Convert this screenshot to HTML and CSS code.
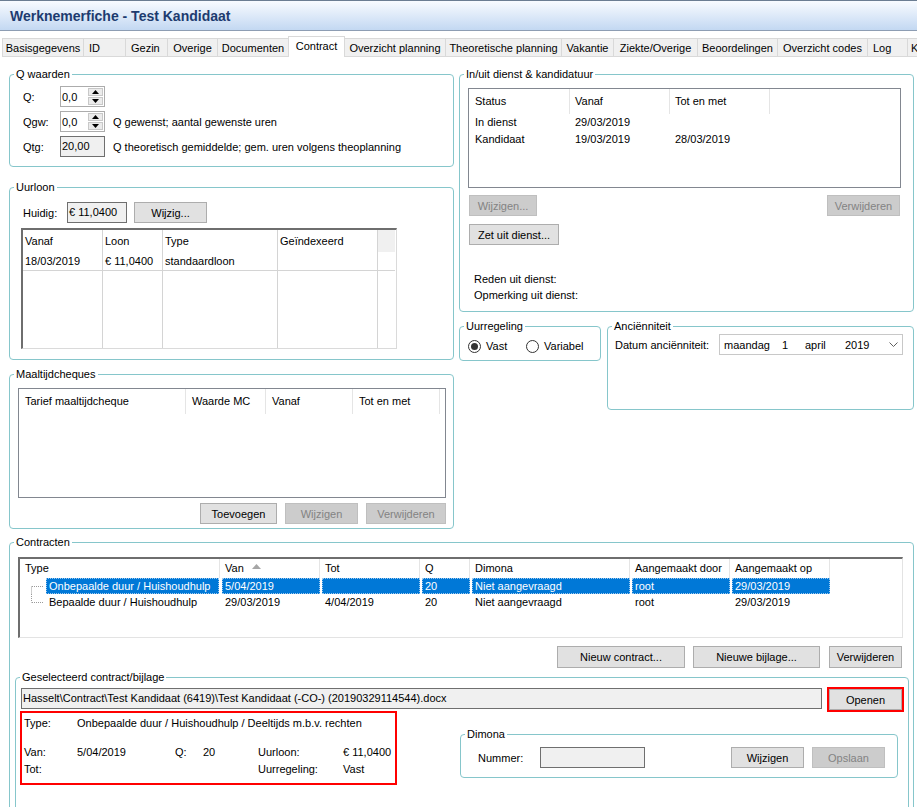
FILE: index.html
```html
<!DOCTYPE html>
<html lang="nl">
<head>
<meta charset="utf-8">
<title>Werknemerfiche - Test Kandidaat</title>
<link rel="stylesheet" href="styles.css">
</head>
<body>
<div class="window">
  <header class="titlebar"><h1 class="title">Werknemerfiche - Test Kandidaat</h1></header>
  <nav class="tabs">
    <div class="tab t-basis">Basisgegevens</div>
    <div class="tab t-id">ID</div>
    <div class="tab t-gezin">Gezin</div>
    <div class="tab t-overige">Overige</div>
    <div class="tab t-doc">Documenten</div>
    <div class="tab t-contract active">Contract</div>
    <div class="tab t-ovp">Overzicht planning</div>
    <div class="tab t-theo">Theoretische planning</div>
    <div class="tab t-vak">Vakantie</div>
    <div class="tab t-ziekte">Ziekte/Overige</div>
    <div class="tab t-beo">Beoordelingen</div>
    <div class="tab t-codes">Overzicht codes</div>
    <div class="tab t-log">Log</div>
    <div class="tab t-k">K</div>
  </nav>

  <main class="page">
    <div class="top">
      <div class="col">
        <fieldset class="group g-q">
          <legend>Q waarden</legend>
          <div class="q-body">
            <div class="q-row">
              <span class="q-label">Q:</span>
              <div class="numbox"><span class="val">0,0</span>
                <span class="spin"><span class="sb"><svg width="7" height="4" viewBox="0 0 7 4"><path d="M0 4 L3.5 0 L7 4Z"/></svg></span><span class="sb"><svg width="7" height="4" viewBox="0 0 7 4"><path d="M0 0 L3.5 4 L7 0Z"/></svg></span></span>
              </div>
            </div>
            <div class="q-row">
              <span class="q-label">Qgw:</span>
              <div class="numbox"><span class="val">0,0</span>
                <span class="spin"><span class="sb"><svg width="7" height="4" viewBox="0 0 7 4"><path d="M0 4 L3.5 0 L7 4Z"/></svg></span><span class="sb"><svg width="7" height="4" viewBox="0 0 7 4"><path d="M0 0 L3.5 4 L7 0Z"/></svg></span></span>
              </div>
              <span class="q-desc">Q gewenst; aantal gewenste uren</span>
            </div>
            <div class="q-row">
              <span class="q-label">Qtg:</span>
              <div class="readbox q-read">20,00</div>
              <span class="q-desc">Q theoretisch gemiddelde; gem. uren volgens theoplanning</span>
            </div>
          </div>
        </fieldset>

        <fieldset class="group g-uurloon">
          <legend>Uurloon</legend>
          <div class="ul-body">
            <div class="ul-row">
              <span class="ul-label">Huidig:</span>
              <div class="readbox money">€ 11,0400</div>
              <div class="btn b-wijzig">Wijzig...</div>
            </div>
            <div class="dgrid">
              <div class="dh">Vanaf</div><div class="dh">Loon</div><div class="dh">Type</div><div class="dh">Geïndexeerd</div><div class="dh filler"></div>
              <div class="dr">18/03/2019</div><div class="dr">€ 11,0400</div><div class="dr">standaardloon</div><div class="dr"></div><div class="dr last"></div>
              <div class="de"></div><div class="de"></div><div class="de"></div><div class="de"></div><div class="de last"></div>
            </div>
          </div>
        </fieldset>

        <fieldset class="group g-mc">
          <legend>Maaltijdcheques</legend>
          <div class="mc-body">
            <div class="list mc-list">
              <div class="lhead">
                <div class="lh w167">Tarief maaltijdcheque</div>
                <div class="lh w80">Waarde MC</div>
                <div class="lh w87">Vanaf</div>
                <div class="lh w87">Tot en met</div>
              </div>
            </div>
            <div class="btn-row mc-btns">
              <div class="btn w77">Toevoegen</div>
              <div class="btn disabled w73">Wijzigen</div>
              <div class="btn disabled w80b">Verwijderen</div>
            </div>
          </div>
        </fieldset>
      </div>

      <div class="col">
        <fieldset class="group g-inuit">
          <legend>In/uit dienst &amp; kandidatuur</legend>
          <div class="iu-body">
            <div class="list iu-list">
              <div class="lhead">
                <div class="lh w101">Status</div>
                <div class="lh w100">Vanaf</div>
                <div class="lh w100">Tot en met</div>
              </div>
              <div class="lrow"><div class="lc w101">In dienst</div><div class="lc w100">29/03/2019</div><div class="lc w100"></div></div>
              <div class="lrow"><div class="lc w101">Kandidaat</div><div class="lc w100">19/03/2019</div><div class="lc w100">28/03/2019</div></div>
            </div>
            <div class="iu-btns">
              <div class="btn disabled w68">Wijzigen...</div>
              <div class="btn disabled w73">Verwijderen</div>
            </div>
            <div class="btn w90 b-zet">Zet uit dienst...</div>
            <div class="iu-info">
              <div>Reden uit dienst:</div>
              <div>Opmerking uit dienst:</div>
            </div>
          </div>
        </fieldset>

        <div class="right-row">
          <fieldset class="group g-uurreg">
            <legend>Uurregeling</legend>
            <div class="ur-body">
              <div class="radio r-vast"><span class="rc on"></span><span>Vast</span></div>
              <div class="radio"><span class="rc"></span><span>Variabel</span></div>
            </div>
          </fieldset>
          <fieldset class="group g-anc">
            <legend>Anciënniteit</legend>
            <div class="anc-body">
              <span class="anc-label">Datum anciënniteit:</span>
              <div class="datebox">
                <span class="d-day">maandag</span><span class="d-num">1</span><span class="d-mon">april</span><span class="d-year">2019</span>
                <svg class="chev" width="9" height="5" viewBox="0 0 9 5"><path d="M0.5 0.5 L4.5 4.5 L8.5 0.5" fill="none" stroke="#606060" stroke-width="1"/></svg>
              </div>
            </div>
          </fieldset>
        </div>
      </div>
    </div>

    <fieldset class="group g-contr">
      <legend>Contracten</legend>
      <div class="ct-body">
        <div class="ct-list">
          <div class="lhead ct-head">
            <div class="lh c200">Type</div>
            <div class="lh c100 sorted">Van <svg class="sort" width="9" height="5" viewBox="0 0 9 5"><path d="M0 5 L4.5 0 L9 5Z" fill="#a6a6a6"/></svg></div>
            <div class="lh c100">Tot</div>
            <div class="lh c50">Q</div>
            <div class="lh c160">Dimona</div>
            <div class="lh c100">Aangemaakt door</div>
            <div class="lh c100">Aangemaakt op</div>
          </div>
          <div class="crow sel">
            <div class="cc c200 ctype"><svg class="tree" width="14" height="16" viewBox="0 0 14 16"><path d="M0.5 8.5 V16 M1 8.5 H13" stroke="#9a9a9a" stroke-dasharray="1 1" fill="none"/></svg><span class="hl">Onbepaalde duur / Huishoudhulp</span></div>
            <div class="cc c100"><span class="hl">5/04/2019</span></div>
            <div class="cc c100"><span class="hl"></span></div>
            <div class="cc c50"><span class="hl">20</span></div>
            <div class="cc c160"><span class="hl">Niet aangevraagd</span></div>
            <div class="cc c100"><span class="hl">root</span></div>
            <div class="cc c100"><span class="hl">29/03/2019</span></div>
          </div>
          <div class="crow">
            <div class="cc c200 ctype"><svg class="tree" width="14" height="16" viewBox="0 0 14 16"><path d="M0.5 0 V8.5 M1 8.5 H13" stroke="#9a9a9a" stroke-dasharray="1 1" fill="none"/></svg><span class="hl">Bepaalde duur / Huishoudhulp</span></div>
            <div class="cc c100"><span class="hl">29/03/2019</span></div>
            <div class="cc c100"><span class="hl">4/04/2019</span></div>
            <div class="cc c50"><span class="hl">20</span></div>
            <div class="cc c160"><span class="hl">Niet aangevraagd</span></div>
            <div class="cc c100"><span class="hl">root</span></div>
            <div class="cc c100"><span class="hl">29/03/2019</span></div>
          </div>
        </div>
        <div class="ct-btns">
          <div class="btn b-nc">Nieuw contract...</div>
          <div class="btn b-nb">Nieuwe bijlage...</div>
          <div class="btn b-vw">Verwijderen</div>
        </div>

        <fieldset class="group g-sel">
          <legend>Geselecteerd contract/bijlage</legend>
          <div class="sel-body">
            <div class="path-row">
              <div class="readbox path">Hasselt\Contract\Test Kandidaat (6419)\Test Kandidaat (-CO-) (20190329114544).docx</div>
              <div class="open-wrap"><div class="btn b-open">Openen</div></div>
            </div>
            <div class="sel-detail">
              <div class="redbox">
                <div class="dt-row">
                  <span class="dt-l">Type:</span><span>Onbepaalde duur / Huishoudhulp / Deeltijds m.b.v. rechten</span>
                </div>
                <div class="dt-row r2">
                  <span class="dt-l">Van:</span><span class="dt-v">5/04/2019</span><span class="dt-q">Q:</span><span class="dt-qv">20</span><span class="dt-ul">Uurloon:</span><span>€ 11,0400</span>
                </div>
                <div class="dt-row r3">
                  <span class="dt-l">Tot:</span><span class="dt-v"></span><span class="dt-q"></span><span class="dt-qv"></span><span class="dt-ul">Uurregeling:</span><span>Vast</span>
                </div>
              </div>
              <fieldset class="group g-dimona">
                <legend>Dimona</legend>
                <div class="dm-body">
                  <span class="dm-label">Nummer:</span>
                  <div class="readbox dm-input"></div>
                  <div class="dm-btns">
                    <div class="btn w73">Wijzigen</div>
                    <div class="btn disabled w73">Opslaan</div>
                  </div>
                </div>
              </fieldset>
            </div>
          </div>
        </fieldset>
      </div>
    </fieldset>
  </main>
</div>
</body>
</html>
```

FILE: styles.css
```css
* { box-sizing: border-box; }
html, body { margin: 0; padding: 0; }
body {
  width: 917px;
  height: 807px;
  overflow: hidden;
  background: #ffffff;
  font-family: "Liberation Sans", Arial, sans-serif;
  font-size: 11px;
  color: #000000;
}
.window { width: 917px; height: 807px; overflow: hidden; }

/* title bar */
.titlebar {
  height: 31px;
  border-top: 1px solid #6b7d92;
  border-bottom: 1px solid #8d9db3;
  background: linear-gradient(#f8fbff, #c3d8f2);
  display: flex;
  align-items: center;
  padding-left: 10px;
}
.title {
  margin: 0;
  font-size: 14px;
  line-height: 16px;
  font-weight: bold;
  color: #1d3b6f;
}

/* tabs */
.tabs {
  display: flex;
  margin-top: 5px;
  height: 21px;
  padding-left: 2px;
  white-space: nowrap;
  overflow: hidden;
}
.tab {
  flex: none;
  height: 19px;
  margin-top: 2px;
  background: #f0f0f0;
  border: 1px solid #d9d9d9;
  border-right: none;
  line-height: 18px;
  text-align: center;
}
.tab.active {
  height: 21px;
  margin-top: 0;
  background: #ffffff;
  border-right: 1px solid #d9d9d9;
  border-bottom: none;
  line-height: 18px;
}
.tab.active + .tab { border-left: none; }
.t-basis { width: 81px; }
.t-id { width: 42px; text-align: left; padding-left: 5px; }
.t-gezin { width: 42px; text-align: left; padding-left: 5px; }
.t-overige { width: 50px; }
.t-doc { width: 71px; }
.t-contract { width: 57px; }
.t-ovp { width: 100px; }
.t-theo { width: 116px; }
.t-vak { width: 52px; }
.t-ziekte { width: 84px; }
.t-beo { width: 80px; }
.t-codes { width: 90px; }
.t-log { width: 40px; text-align: left; padding-left: 5px; }
.t-k { width: 30px; text-align: left; padding-left: 3px; }

/* page */
.page { padding: 11px 0 0 9px; }
.top {
  display: grid;
  grid-template-columns: 445px 455px;
  column-gap: 5px;
  align-items: start;
}
.col { display: flex; flex-direction: column; }

.group {
  margin: 0;
  padding: 0;
  border: 1px solid #86c6cb;
  border-radius: 4px;
  min-width: 0;
}
.group > legend {
  margin-left: 4px;
  padding: 0 2px;
  line-height: 13px;
  font-size: 11px;
}

/* generic controls */
.btn {
  flex: none;
  height: 21px;
  border: 1px solid #adadad;
  background: #e1e1e1;
  display: flex;
  align-items: center;
  justify-content: center;
  white-space: nowrap;
}
.btn.disabled {
  background: #cccccc;
  border-color: #bfbfbf;
  color: #838383;
}
.readbox {
  height: 21px;
  border: 1px solid #6f6f6f;
  background: #f0f0f0;
  padding-left: 1px;
  line-height: 19px;
  white-space: nowrap;
  overflow: hidden;
}
.w68 { width: 68px; }
.w73 { width: 73px; }
.w77 { width: 77px; }
.w80b { width: 80px; }
.w90 { width: 90px; }

/* Q waarden */
.g-q { height: 99px; }
.q-body {
  padding: 5px 0 0 13px;
  display: flex;
  flex-direction: column;
  gap: 4px;
}
.q-row { display: flex; align-items: center; height: 21px; }
.q-label { width: 37px; }
.numbox {
  width: 45px;
  height: 21px;
  border: 1px solid #acacac;
  background: #ffffff;
  display: flex;
  align-items: center;
  padding-left: 1px;
}
.numbox .val { flex: 1; }
.spin {
  width: 15px;
  height: 17px;
  margin-right: 1px;
  display: flex;
  flex-direction: column;
  gap: 1px;
}
.sb {
  flex: 1;
  background: #ebebeb;
  border: 1px solid #c8c8c8;
  display: flex;
  align-items: center;
  justify-content: center;
}
.sb svg { display: block; fill: #000000; }
.q-read { width: 45px; }
.q-desc { margin-left: 8px; white-space: nowrap; }

/* Uurloon */
.g-uurloon { height: 179px; margin-top: 14px; }
.ul-body { padding: 8px 0 0 11px; }
.ul-row { display: flex; align-items: center; height: 21px; padding-left: 2px; }
.ul-label { width: 44px; }
.money { width: 60px; }
.b-wijzig { width: 73px; margin-left: 7px; }
.dgrid {
  margin-top: 5px;
  width: 376px;
  height: 121px;
  border-top: 2px solid #6e6e6e;
  border-left: 2px solid #6e6e6e;
  border-right: 1px solid #dadada;
  border-bottom: 1px solid #dadada;
  display: grid;
  grid-template-columns: 80px 60px 115px 100px 17px;
  grid-template-rows: 22px 19px 1fr;
}
.dh, .dr, .de { border-right: 1px solid #d4d4d4; padding-left: 2px; white-space: nowrap; overflow: hidden; }
.dh { line-height: 22px; }
.dh.filler { background: #f0f0f0; border-right: none; }
.dr { line-height: 18px; border-bottom: 1px solid #d4d4d4; }
.dr.last, .de.last { border-right: none; }

/* lists */
.list { border: 1px solid #828790; background: #ffffff; }
.lhead { display: flex; height: 25px; }
.lh {
  flex: none;
  border-right: 1px solid #e5e5e5;
  padding-left: 6px;
  line-height: 25px;
  white-space: nowrap;
  overflow: hidden;
}
.lrow { display: flex; height: 17px; line-height: 17px; }
.lc { flex: none; padding-left: 6px; white-space: nowrap; }
.w167 { width: 167px; }
.w80 { width: 80px; }
.w87 { width: 87px; }
.w101 { width: 101px; }
.w100 { width: 100px; padding-left: 5px; }

/* Maaltijdcheques */
.g-mc { height: 161px; margin-top: 8px; }
.mc-body { padding: 7px 0 0 8px; }
.mc-list { width: 428px; height: 110px; }
.btn-row { display: flex; justify-content: flex-end; gap: 8px; }
.mc-btns { margin-top: 5px; width: 428px; }

/* In/uit dienst */
.g-inuit { height: 244px; }
.iu-body { padding: 7px 0 0 8px; }
.iu-list { width: 433px; height: 100px; }
.iu-btns {
  display: flex;
  justify-content: space-between;
  width: 433px;
  margin-top: 7px;
  padding: 0 1px;
}
.b-zet { margin-top: 8px; margin-left: 1px; }
.iu-info { margin-top: 26px; padding-left: 6px; line-height: 16px; }

/* Uurregeling / Anciënniteit */
.right-row { display: flex; gap: 6px; margin-top: 8px; align-items: flex-start; }
.g-uurreg { width: 142px; height: 41px; }
.ur-body { display: flex; align-items: center; height: 16px; margin-top: 5px; padding-left: 8px; }
.radio { display: flex; align-items: center; gap: 5px; }
.r-vast { width: 58px; }
.rc {
  width: 13px;
  height: 13px;
  border: 1px solid #333333;
  border-radius: 50%;
  background: #ffffff;
  display: flex;
  align-items: center;
  justify-content: center;
}
.rc.on::after {
  content: "";
  width: 7px;
  height: 7px;
  border-radius: 50%;
  background: #333333;
}
.g-anc { width: 307px; height: 90px; }
.anc-body { display: flex; align-items: center; padding: 1px 0 0 7px; }
.anc-label { width: 104px; }
.datebox {
  width: 184px;
  height: 21px;
  border: 1px solid #c8c8c8;
  background: #ffffff;
  display: flex;
  align-items: center;
  padding-left: 4px;
}
.d-day { width: 58px; }
.d-num { width: 23px; }
.d-mon { width: 40px; }
.chev { margin-left: auto; margin-right: 4px; display: block; }

/* Contracten */
.g-contr { margin-top: 7px; width: 905px; height: 300px; }
.ct-body { padding: 8px 0 0 5px; }
.ct-list {
  margin-left: 3px;
  width: 885px;
  height: 81px;
  border-top: 2px solid #6e6e6e;
  border-left: 2px solid #6e6e6e;
  border-right: 1px solid #e3e3e3;
  border-bottom: 1px solid #e3e3e3;
  background: #ffffff;
}
.ct-head { height: 19px; }
.ct-head .lh { line-height: 19px; padding-left: 5px; }
.c200 { width: 200px; }
.c100 { width: 100px; }
.c50 { width: 50px; }
.c160 { width: 160px; }
.sorted { display: flex; align-items: center; }
.sort { margin-left: 8px; margin-top: -4px; display: block; }
.crow { display: flex; height: 16px; }
.cc { flex: none; padding-left: 2px; display: flex; white-space: nowrap; overflow: hidden; }
.hl {
  flex: 1;
  height: 16px;
  line-height: 14px;
  padding-left: 2px;
  border: 1px dotted transparent;
}
.crow.sel .hl {
  background: #0078d7;
  color: #ffffff;
  border-color: #9fc9ee;
}
.ctype { padding-left: 11px; }
.tree { flex: none; display: block; margin-right: 1px; }
.ctype .hl { flex: none; padding-right: 2px; }
.crow .ctype .hl { width: 173px; }
.ct-btns { display: flex; justify-content: flex-end; margin-top: 8px; margin-left: 3px; width: 884px; }
.ct-btns .btn { height: 22px; }
.b-nc { width: 128px; }
.b-nb { width: 127px; margin-left: 8px; }
.b-vw { width: 73px; margin-left: 9px; }

/* Geselecteerd contract */
.g-sel { margin-top: 3px; width: 894px; height: 160px; }
.sel-body { padding: 3px 0 0 4px; }
.path-row { display: flex; align-items: flex-start; height: 24px; padding-left: 1px; }
.path { margin-top: 1px; width: 801px; }
.open-wrap { margin-left: 5px; width: 77px; height: 25px; border: 2px solid #ff0000; display: flex; }
.b-open { flex: 1; height: 21px; }
.sel-detail { display: flex; align-items: flex-start; }
.redbox {
  width: 377px;
  height: 74px;
  border: 2px solid #ff0000;
  padding: 2px 0 0 2px;
}
.dt-row { display: flex; line-height: 16px; white-space: nowrap; }
.dt-row.r2 { margin-top: 13px; }
.dt-row.r3 { margin-top: 1px; }
.dt-l { width: 53px; }
.dt-v { width: 98px; }
.dt-q { width: 28px; }
.dt-qv { width: 55px; }
.dt-ul { width: 85px; }
.g-dimona { margin-left: 63px; margin-top: 17px; width: 438px; height: 50px; }
.dm-body { display: flex; align-items: center; padding: 6px 12px 0 17px; }
.dm-label { width: 62px; }
.dm-input { width: 105px; }
.dm-btns { margin-left: auto; display: flex; gap: 8px; }
```
